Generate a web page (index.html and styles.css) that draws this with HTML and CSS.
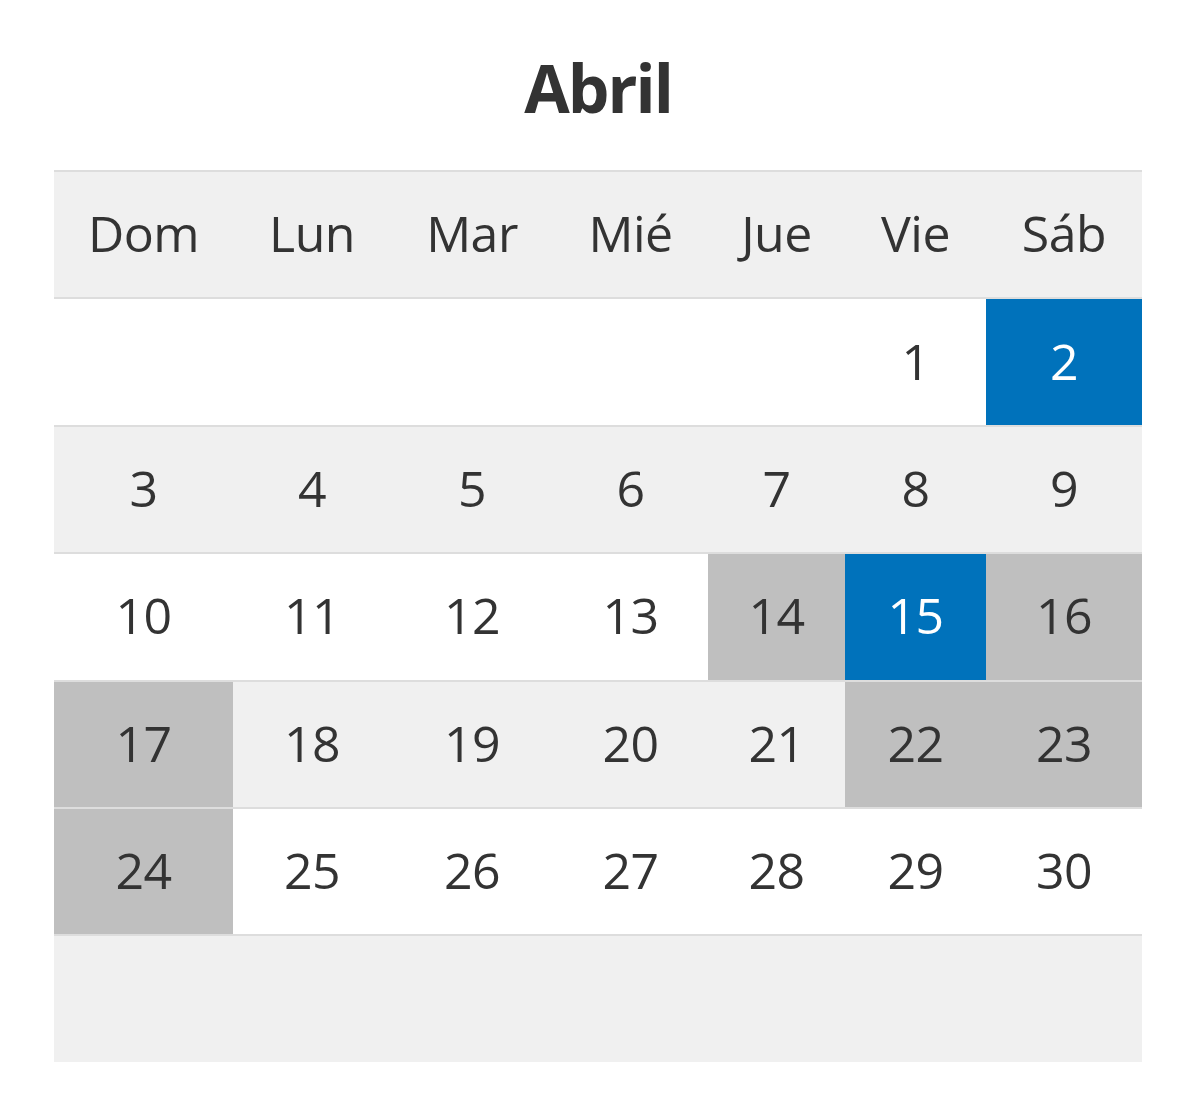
FILE: index.html
```html
<!DOCTYPE html>
<html lang="es">
<head>
<meta charset="utf-8">
<title>Abril</title>
<link rel="stylesheet" href="styles.css">
</head>
<body>
<div class="calendar">
  <h2 class="month">Abril</h2>
  <table class="grid">
    <colgroup>
      <col class="c1"><col class="c2"><col class="c3"><col class="c4"><col class="c5"><col class="c6"><col class="c7">
    </colgroup>
    <thead>
      <tr class="shade">
        <th>Dom</th><th>Lun</th><th>Mar</th><th>Mié</th><th>Jue</th><th>Vie</th><th>Sáb</th>
      </tr>
    </thead>
    <tbody>
      <tr>
        <td></td><td></td><td></td><td></td><td></td><td>1</td><td class="today">2</td>
      </tr>
      <tr class="shade">
        <td>3</td><td>4</td><td>5</td><td>6</td><td>7</td><td>8</td><td>9</td>
      </tr>
      <tr>
        <td>10</td><td>11</td><td>12</td><td>13</td><td class="off">14</td><td class="today">15</td><td class="off">16</td>
      </tr>
      <tr class="shade">
        <td class="off">17</td><td>18</td><td>19</td><td>20</td><td>21</td><td class="off">22</td><td class="off">23</td>
      </tr>
      <tr>
        <td class="off">24</td><td>25</td><td>26</td><td>27</td><td>28</td><td>29</td><td>30</td>
      </tr>
      <tr class="shade">
        <td></td><td></td><td></td><td></td><td></td><td></td><td></td>
      </tr>
    </tbody>
  </table>
</div>
</body>
</html>
```
FILE: styles.css
```css
html, body {
  margin: 0;
  padding: 0;
  background: #ffffff;
}

body {
  font-family: "Open Sans", "Noto Sans", "Liberation Sans", sans-serif;
  color: #333333;
}

.calendar {
  padding: 54px 58px 0 54px;
  width: 1088px;
}

.month {
  margin: 0 0 50px 0;
  font-size: 66px;
  line-height: 66px;
  font-weight: 700;
  text-align: center;
  letter-spacing: -2px;
  color: #333333;
}

.grid {
  width: 1088px;
  border-collapse: collapse;
  table-layout: fixed;
}

.c1 { width: 179px; }
.c2 { width: 158px; }
.c3 { width: 162px; }
.c4 { width: 155px; }
.c5 { width: 137px; }
.c6 { width: 141px; }
.c7 { width: 156px; }

.grid tr {
  border-top: 2px solid #dddddd;
}

.grid th,
.grid td {
  height: 122.4px;
  padding: 0 0 3px 0;
  text-align: center;
  vertical-align: middle;
  font-size: 50px;
  font-weight: 400;
  letter-spacing: -0.5px;
  color: #333333;
}

.shade {
  background: #f0f0f0;
}

.grid td.off {
  background: #bfbfbf;
}

.grid td.today {
  background: #0072bb;
  color: #ffffff;
}
```
